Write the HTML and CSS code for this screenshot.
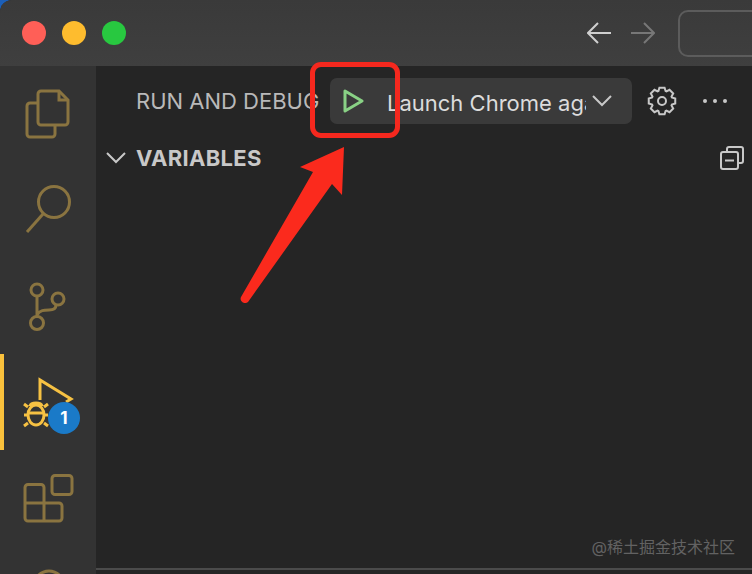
FILE: index.html
```html
<!DOCTYPE html>
<html>
<head>
  <title>Run and Debug</title>
  <meta name="viewport" content="width=device-width, initial-scale=1.0">
  <link rel="stylesheet" href="styles.css">
</head>
<body>
  <div class="window">
    <div class="titlebar">
      <div class="lights">
        <span class="light red"></span>
        <span class="light yellow"></span>
        <span class="light green"></span>
      </div>
      <div class="nav">
        <svg class="nav-icon" width="24" height="24" viewBox="0 0 24 24"><path d="M24 12H1M11 2 1 12l10 10"/></svg>
        <svg class="nav-icon off" width="24" height="24" viewBox="0 0 24 24"><path d="M0 12h23M13 2l10 10-10 10"/></svg>
      </div>
      <div class="search"></div>
    </div>

    <div class="main">
      <div class="activity">
        <div class="act-item">
          <svg class="act-icon" width="96" height="96" viewBox="0 0 96 96">
            <path d="M38 37H30a3 3 0 0 0-3 3v28a3 3 0 0 0 3 3h22a3 3 0 0 0 3-3v-9"/>
            <path d="M41 25h18l9 9v22a3 3 0 0 1-3 3H41a3 3 0 0 1-3-3V28a3 3 0 0 1 3-3z"/>
            <path d="M59 25v9h9"/>
          </svg>
        </div>
        <div class="act-item">
          <svg class="act-icon" width="96" height="96" viewBox="0 0 96 96">
            <circle cx="54" cy="40" r="15.5"/>
            <path d="M43 52 27 70"/>
          </svg>
        </div>
        <div class="act-item">
          <svg class="act-icon" width="96" height="96" viewBox="0 0 96 96">
            <circle cx="37" cy="32" r="6"/>
            <circle cx="58" cy="41" r="6"/>
            <circle cx="37" cy="65" r="6.5"/>
            <path d="M37 38v20M37 57c3-5 7-5 12-5 5 0 7-2 7-5"/>
          </svg>
        </div>
        <div class="act-item active">
          <svg class="act-icon" width="96" height="96" viewBox="0 0 96 96">
            <path d="M40 46V26l31 19-5 3"/>
            <ellipse cx="36" cy="61" rx="8" ry="10"/>
            <path d="M30 52c1-4 11-4 12 0M28 59h16M28 53l-4-3M44 53l4-3M28 61h-4M44 61h4M28 69l-4 3M44 69l4 3"/>
          </svg>
          <span class="badge">1</span>
        </div>
        <div class="act-item">
          <svg class="act-icon" width="96" height="96" viewBox="0 0 96 96">
            <rect x="52" y="25.500" width="20" height="19" rx="3"/>
            <path d="M28 34.500h13a3 3 0 0 1 3 3V53h15a3 3 0 0 1 3 3v12a3 3 0 0 1-3 3H28a3 3 0 0 1-3-3V37.500a3 3 0 0 1 3-3zM25 53h19v18"/>
          </svg>
        </div>
        <div class="act-item">
          <svg class="act-icon" width="96" height="96" viewBox="0 0 96 96">
            <circle cx="49" cy="40" r="15"/>
          </svg>
        </div>
      </div>

      <div class="sidebar">
        <div class="toolbar">
          <div class="side-title">RUN AND DEBUG</div>
          <div class="launch">
            <svg class="play" width="22" height="26" viewBox="0 0 22 26"><path d="M3 3v20l17-10z"/></svg>
            <span class="launch-name">Launch Chrome aga</span>
            <svg class="tool-icon" width="22" height="14" viewBox="0 0 22 14"><path d="M2 2l9 9 9-9"/></svg>
          </div>
          <svg class="tool-icon gear" width="30" height="30" viewBox="0 0 30 30">
            <path d="M11.400 5.130 12.420 1.750H17.580L18.600 5.130 19.430 5.480 22.540 3.810 26.190 7.460 24.520 10.570 24.870 11.400 28.250 12.420V17.580L24.870 18.600 24.520 19.430 26.190 22.540 22.540 26.190 19.430 24.520 18.600 24.870 17.580 28.250H12.420L11.400 24.870 10.570 24.520 7.460 26.190 3.810 22.540 5.480 19.430 5.130 18.600 1.750 17.580V12.420L5.130 11.400 5.480 10.570 3.810 7.460 7.460 3.810 10.570 5.480z"/>
            <circle cx="15" cy="15" r="4"/>
          </svg>
          <div class="dots"><span></span><span></span><span></span></div>
        </div>

        <div class="section">
          <svg class="tool-icon" width="20" height="12" viewBox="0 0 20 12"><path d="M1 1l9 9 9-9"/></svg>
          <span class="section-name">VARIABLES</span>
          <svg class="tool-icon collapse" width="24" height="24" viewBox="0 0 24 24">
            <path d="M7 6V3a2 2 0 0 1 2-2h12a2 2 0 0 1 2 2v12a2 2 0 0 1-2 2h-3"/>
            <rect x="1" y="6" width="17" height="17" rx="2"/>
            <path d="M5 14.500h9"/>
          </svg>
        </div>

        <div class="panel-edge"></div>
      </div>
    </div>

    <!-- annotation drawn on top of the screenshot -->
    <div class="mark-box"></div>
    <svg class="mark-arrow" width="752" height="574" viewBox="0 0 752 574">
      <path d="M344 147 300 167 313 172 241 297c-2 4 4 8 7 5L332 184 342 195z"/>
    </svg>
    <div class="watermark">@稀土掘金技术社区</div>
  </div>
</body>
</html>
```

FILE: styles.css
```css
* {
  box-sizing: border-box;
}

html, body {
  margin: 0;
  height: 100%;
  overflow: hidden;
  background-color: #1c5fb8;
}

.window {
  position: relative;
  width: 752px;
  height: 574px;
  overflow: hidden;
  border-top-left-radius: 12px;
  font-family: Inter, "Liberation Sans", "Noto Sans CJK SC", sans-serif;
  background-color: #252525;
}

.titlebar {
  display: flex;
  align-items: center;
  height: 66px;
  padding-left: 22px;
  background: linear-gradient(#3a3a3a, #3f3f3f);
}

.lights {
  display: flex;
  gap: 16px;
}

.light {
  width: 24px;
  height: 24px;
  border-radius: 50%;
}

.red { background-color: #ff5f57; }
.yellow { background-color: #febc2e; }
.green { background-color: #28c840; }

.nav {
  display: flex;
  gap: 20px;
  margin-left: 461px;
}

.nav-icon {
  fill: none;
  stroke: #cfcfcf;
  stroke-width: 2;
}

.nav-icon.off {
  stroke: #777;
}

.search {
  width: 100px;
  height: 47px;
  margin-left: 23px;
  flex-shrink: 0;
  border: 2px solid #5c5c5c;
  border-radius: 10px;
}

.main {
  display: flex;
  height: 508px;
}

.activity {
  width: 96px;
  flex-shrink: 0;
  overflow: hidden;
  background-color: #333;
}

.act-item {
  position: relative;
  height: 96px;
}

.act-icon {
  display: block;
  fill: none;
  stroke: #8a7440;
  stroke-width: 3;
}

.act-item.active {
  border-left: 4px solid #fac13c;
}

.act-item.active .act-icon {
  margin-left: -4px;
  stroke: #f6c143;
}

.badge {
  position: absolute;
  top: 48px;
  left: 44px;
  width: 32px;
  height: 32px;
  border-radius: 50%;
  background-color: #1a7ac8;
  color: #fff;
  font-size: 17px;
  font-weight: 700;
  line-height: 32px;
  text-align: center;
}

.sidebar {
  display: flex;
  flex-direction: column;
  flex: 1;
  min-width: 0;
  background-color: #252525;
}

.toolbar {
  display: flex;
  align-items: center;
  height: 46px;
  margin-top: 12px;
  padding-left: 40px;
}

.side-title {
  width: 184px;
  flex-shrink: 0;
  overflow: hidden;
  white-space: nowrap;
  font-size: 22px;
  color: #b9b9b9;
}

.launch {
  display: flex;
  align-items: center;
  width: 302px;
  height: 46px;
  margin-left: 10px;
  padding-left: 12px;
  flex-shrink: 0;
  border-radius: 7px;
  background-color: #3a3a3a;
}

.play {
  flex-shrink: 0;
  fill: none;
  stroke: #89d185;
  stroke-width: 3;
  stroke-linejoin: round;
}

.launch-name {
  width: 199px;
  margin-left: 23px;
  padding-top: 3px;
  flex-shrink: 0;
  overflow: hidden;
  white-space: nowrap;
  font-size: 22px;
  color: #dcdcdc;
}

.tool-icon {
  flex-shrink: 0;
  fill: none;
  stroke: #c8c8c8;
  stroke-width: 2;
}

.launch .tool-icon {
  margin-left: 5px;
}

.gear {
  margin-left: 15px;
}

.dots {
  display: flex;
  gap: 6px;
  margin-left: 26px;
}

.dots span {
  width: 4px;
  height: 4px;
  border-radius: 50%;
  background-color: #c8c8c8;
}

.section {
  display: flex;
  align-items: center;
  height: 24px;
  margin-top: 22px;
  padding-left: 10px;
}

.section-name {
  margin-left: 10px;
  font-size: 22px;
  font-weight: 700;
  letter-spacing: 0.3px;
  color: #c8c8c8;
}

.collapse {
  margin-left: auto;
  margin-right: 8px;
}

.panel-edge {
  height: 6px;
  margin-top: auto;
  border-top: 2px solid #4b4b4b;
}

.mark-box {
  position: absolute;
  top: 62px;
  left: 310px;
  width: 90px;
  height: 76px;
  border: 5px solid #f5281e;
  border-radius: 11px;
}

.mark-arrow {
  position: absolute;
  top: 0;
  left: 0;
  fill: #fb2a1d;
}

.watermark {
  position: absolute;
  right: 17px;
  bottom: 16px;
  font-size: 16px;
  color: #626262;
}
```
